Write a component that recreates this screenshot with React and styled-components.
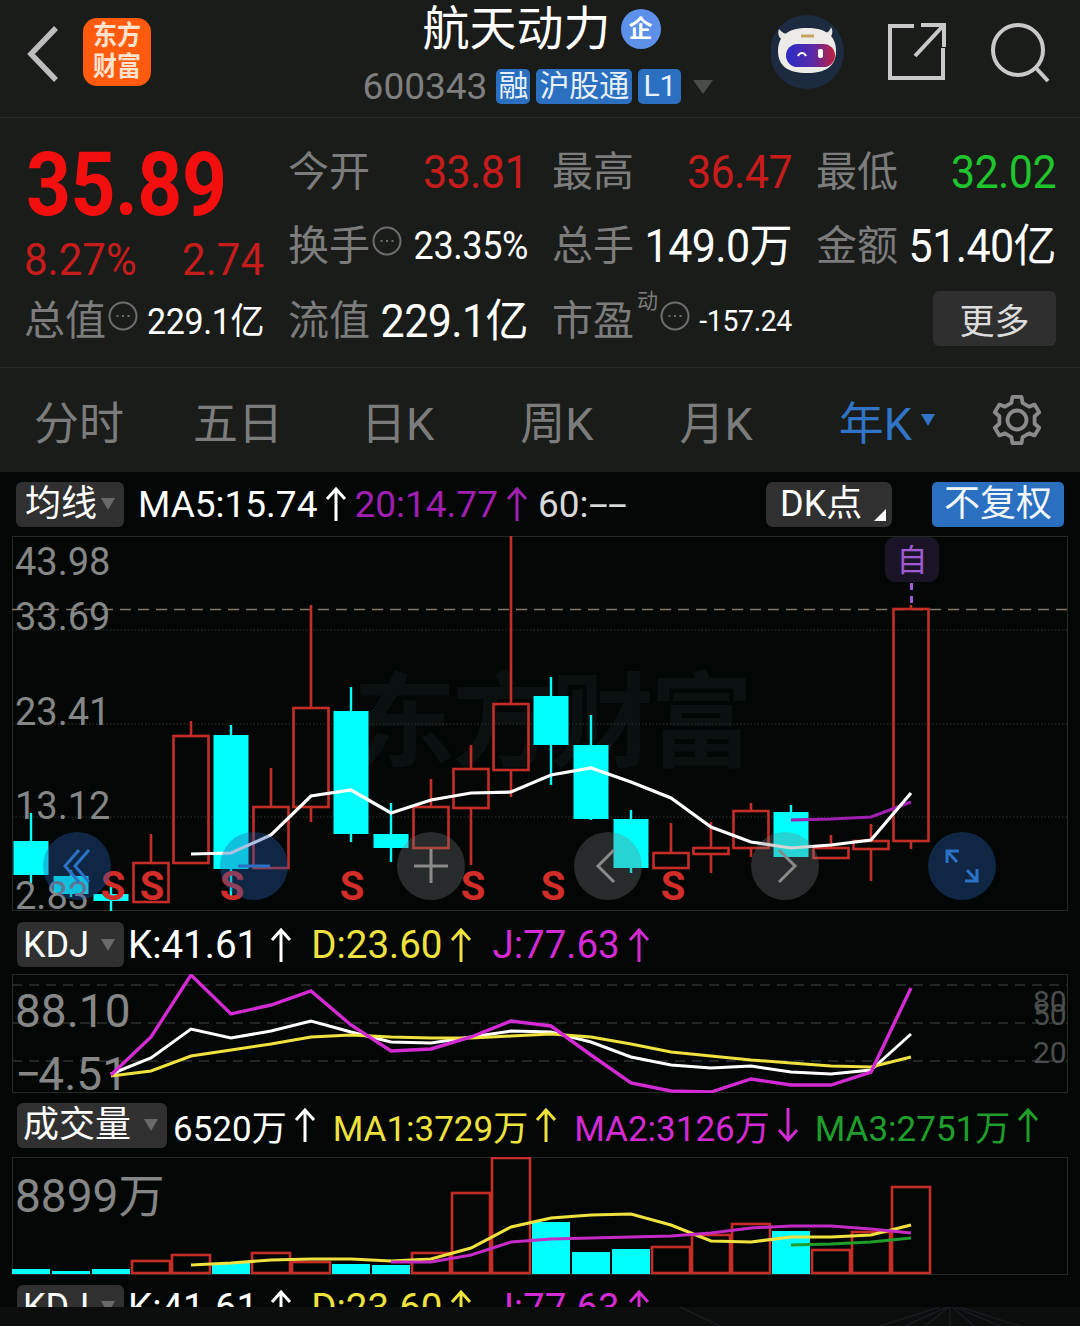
import React from 'react';
import styled, { createGlobalStyle } from 'styled-components';

const GlobalStyle = createGlobalStyle`
	html, body {
		margin: 0;
		background: #0b0e0d;
	}
	* {
		box-sizing: border-box;
	}
`;

const FONT = 'Roboto, "Noto Sans CJK SC", sans-serif';
const RED = '#c62d27';
const CYAN = '#00ffff';
const BLUE = '#2b72c6';

const Page = styled.div`
	width: 1080px;
	height: 1326px;
	display: flex;
	flex-direction: column;
	overflow: hidden;
	background: #1a1c1a;
	font-family: ${FONT};
`;

const Header = styled.header`
	height: 118px;
	display: grid;
	grid-template-columns: 1fr auto 1fr;
	border-bottom: 1px solid #2a2c2a;
`;

const HeaderLeft = styled.div`
	display: flex;
	align-items: flex-start;
	padding: 18px 0 0 26px;
	gap: 21px;
`;

const BackIcon = styled.svg`
	width: 36px;
	height: 60px;
	margin-top: 4px;
`;

const Logo = styled.div`
	width: 68px;
	height: 68px;
	border-radius: 14px;
	background: #ff5a0e;
	color: #ffe3cf;
	display: flex;
	align-items: center;
	justify-content: center;
`;

const LogoText = styled.span`
	font-size: 24px;
	font-weight: 700;
	line-height: 27px;
	text-align: center;
	transform: scaleY(1.12);
`;

const TitleBlock = styled.div`
	display: flex;
	flex-direction: column;
	align-items: center;
`;

const TitleRow = styled.div`
	display: flex;
	align-items: center;
	gap: 10px;
	height: 58px;
	padding-left: 3px;
	color: #fff;
	font-size: 47px;
	line-height: 58px;
`;

const CorpBadge = styled.span`
	width: 40px;
	height: 40px;
	border-radius: 50%;
	background: #5d90e8;
	color: #fff;
	font-size: 24px;
	font-weight: 700;
	line-height: 40px;
	text-align: center;
`;

const SubRow = styled.div`
	display: flex;
	align-items: center;
	gap: 6px;
	margin: 11px 0 0 -4px;
	height: 35px;
`;

const Code = styled.span`
	color: #7f7f7f;
	font-size: 37px;
	margin-right: 3px;
`;

const Tag = styled.span`
	height: 35px;
	padding: 0 ${({ $pad }) => $pad}px;
	border-radius: 5px;
	background: #2a6fc0;
	color: #e6f0fb;
	font-size: 30px;
	line-height: 34px;
`;

const TagArrow = styled.span`
	width: 0;
	height: 0;
	margin-left: 6px;
	border-left: 10px solid transparent;
	border-right: 10px solid transparent;
	border-top: 14px solid #4a4c4a;
`;

const HeaderRight = styled.div`
	display: flex;
	justify-content: flex-end;
	align-items: flex-start;
	padding: 15px 30px 0 0;
	gap: 40px;
`;

const IconSvg = styled.svg`
	width: ${({ $size }) => $size}px;
	height: ${({ $size }) => $size}px;
	margin-top: ${({ $top }) => $top || 0}px;
	margin-left: ${({ $left }) => $left || 0}px;
`;

const Quote = styled.section`
	height: 250px;
	padding: 24px 24px 0 24px;
	display: grid;
	grid-template-columns: repeat(4, 240px);
	grid-template-rows: 74px 75px 75px;
	column-gap: 24px;
	border-bottom: 1px solid #2a2c2a;
`;

const PriceBlock = styled.div`
	grid-row: span 2;
	display: flex;
	flex-direction: column;
`;

const Price = styled.div`
	margin: 2px 0 0 2px;
	color: #f40f0f;
	font-size: 78.5px;
	font-weight: 700;
	line-height: 72px;
	letter-spacing: -0.5px;
	transform: scaleY(1.13);
	transform-origin: left top;
`;

const Change = styled.div`
	display: flex;
	justify-content: space-between;
	margin-top: 22px;
	color: #c61c1c;
	font-size: 42px;
	line-height: 44px;
	transform: scaleY(1.06);
`;

const Stat = styled.div`
	display: flex;
	align-items: center;
	justify-content: space-between;
	height: 60px;
`;

const StatLabel = styled.span`
	display: flex;
	align-items: center;
	gap: 2px;
	color: #7c7c7c;
	font-size: 41px;
	line-height: 60px;
	white-space: nowrap;
`;

const StatValue = styled.span`
	color: ${({ $color }) => $color || '#fff'};
	font-size: ${({ $size }) => $size || 43}px;
	line-height: 60px;
	white-space: nowrap;
	letter-spacing: ${({ $size }) => ($size ? '-0.4px' : '-0.6px')};
	transform: scaleY(1.06);
`;

const Super = styled.sup`
	color: #7c7c7c;
	font-size: 21px;
	line-height: 21px;
	margin: -40px 0 0 1px;
`;

const MoreButton = styled.button`
	width: 123px;
	height: 55px;
	margin: -5px 0 0 auto;
	padding: 0;
	border: 0;
	border-radius: 6px;
	background: #2e2f2e;
	color: #dcdcdc;
	font-family: ${FONT};
	font-size: 35px;
`;

const Tabs = styled.nav`
	height: 104px;
	padding: 0 0 0 34px;
	display: flex;
	align-items: center;
	background: #1a1c1a;
`;

const Tab = styled.span`
	margin-right: ${({ $gap }) => $gap}px;
	color: ${({ $active }) => ($active ? '#2f74c6' : '#7c7c7c')};
	font-size: 45px;
	white-space: nowrap;
`;

const TabCaret = styled.span`
	width: 0;
	height: 0;
	border-left: 7px solid transparent;
	border-right: 7px solid transparent;
	border-top: 12px solid #2f74c6;
`;

const ChartArea = styled.main`
	flex: 1;
	min-height: 0;
	overflow: hidden;
	background: #020706;
`;

const LegendRow = styled.div`
	height: ${({ $height }) => $height || 64}px;
	padding: ${({ $top }) => $top || 0}px 16px 0 ${({ $left }) => $left || 16}px;
	display: flex;
	align-items: center;
`;

const Selector = styled.span`
	width: ${({ $width }) => $width}px;
	height: 45px;
	padding-left: ${({ $pad }) => $pad || 6}px;
	border-radius: 6px;
	background: #2f302f;
	color: #fff;
	font-size: 36px;
	line-height: 44px;
	display: flex;
	align-items: center;
	justify-content: space-between;
	flex-shrink: 0;
`;

const SelectorCaret = styled.span`
	width: 0;
	height: 0;
	margin-right: 9px;
	border-left: 7px solid transparent;
	border-right: 7px solid transparent;
	border-top: 12px solid #6a6a6a;
`;

const Reading = styled.span`
	display: flex;
	align-items: center;
	gap: ${({ $arrowGap }) => $arrowGap || 8}px;
	margin-left: ${({ $left }) => $left}px;
	color: ${({ $color }) => $color || '#fff'};
	font-size: ${({ $size }) => $size || 37}px;
	white-space: nowrap;
`;

const Dashes = styled.span`
	display: inline-block;
	transform: scaleX(1.85);
	transform-origin: left center;
`;

const UpDown = styled.svg`
	width: 22px;
	height: 36px;
	transform: ${({ $down }) => ($down ? 'rotate(180deg)' : 'none')};
`;

const DkButton = styled.span`
	width: 126px;
	height: 45px;
	margin-left: auto;
	border-radius: 7px;
	background: #2f302f;
	color: #fff;
	font-size: 36px;
	line-height: 44px;
	padding-left: 14px;
	position: relative;
`;

const DkCorner = styled.span`
	position: absolute;
	right: 6px;
	bottom: 6px;
	width: 0;
	height: 0;
	border-left: 12px solid transparent;
	border-bottom: 12px solid #fff;
`;

const AdjustButton = styled.span`
	width: 132px;
	height: 45px;
	margin-left: 40px;
	border-radius: 5px;
	background: #2a6fc0;
	color: #f2f7fd;
	font-size: 36px;
	line-height: 44px;
	text-align: center;
`;

const Frame = styled.div`
	position: relative;
	width: 1056px;
	height: ${({ $height }) => $height}px;
	margin-left: 12px;
	border: 1px solid #262a27;
`;

const Drawing = styled.svg`
	display: block;
	position: absolute;
	left: -1px;
	top: -1px;
	width: 1056px;
	height: ${({ $height }) => $height}px;
`;

const Watermark = styled.span`
	position: absolute;
	left: 340px;
	top: 127px;
	color: #0b1110;
	font-size: 103px;
	font-weight: 700;
	line-height: 120px;
	letter-spacing: -4px;
	white-space: nowrap;
`;

const RoundButton = styled.span`
	position: absolute;
	left: ${({ $cx }) => $cx - 46}px;
	top: 295px;
	width: 68px;
	height: 68px;
	border-radius: 50%;
	background: ${({ $blue }) => ($blue ? 'rgba(36, 92, 170, 0.38)' : 'rgba(120, 120, 120, 0.32)')};
	display: flex;
	align-items: center;
	justify-content: center;
`;

const RoundIcon = styled.svg`
	width: 40px;
	height: 40px;
	fill: none;
	stroke: ${({ $blue }) => ($blue ? BLUE : '#8a8a8a')};
	stroke-width: 3;
`;

const AxisText = styled.text`
	fill: ${({ $dim }) => ($dim ? '#4c4e4d' : '#868686')};
	font-family: ${FONT};
	font-size: ${({ $size }) => $size}px;
`;

const SellMark = styled.text`
	fill: #d22d28;
	font-family: ${FONT};
	font-size: 40px;
	font-weight: 700;
	text-anchor: middle;
`;

const SelfMark = styled.text`
	fill: #a05ad6;
	font-family: ${FONT};
	font-size: 31px;
	text-anchor: middle;
`;

const BottomBar = styled.footer`
	height: 19px;
	flex-shrink: 0;
	background: #0b0e0d;
`;

const FanLines = styled.svg`
	display: block;
	width: 1080px;
	height: 19px;
`;

const cx = (i) => 31 + 40 * i;

// [top of wick, body top, body bottom, bottom of wick, rising]
const CANDLES = [
	[813, 841, 875, 883, false],
	[870, 876, 894, 897, false],
	[887, 894, 901, 911, false],
	[834, 863, 902, 902, true],
	[721, 736, 863, 863, true],
	[725, 735, 869, 897, false],
	[768, 807, 868, 868, true],
	[605, 708, 807, 822, true],
	[687, 711, 834, 842, false],
	[803, 834, 848, 862, false],
	[779, 807, 848, 848, true],
	[745, 769, 808, 865, true],
	[536, 704, 770, 797, true],
	[677, 696, 745, 785, false],
	[715, 745, 819, 820, false],
	[810, 819, 868, 873, false],
	[823, 853, 868, 868, true],
	[822, 848, 854, 873, true],
	[803, 811, 848, 857, true],
	[805, 812, 857, 857, false],
	[835, 848, 858, 858, true],
	[824, 841, 849, 881, true],
	[605, 609, 841, 849, true],
];

const line = (startIndex, ys) => ys.map((y, i) => `${cx(startIndex + i)},${y}`).join(' ');

const MA5 = line(4, [854, 853, 835, 796, 790, 813, 800, 793, 792, 775, 768, 782, 798, 827, 842, 848, 845, 840, 793]);
const MA20 = line(19, [820, 819, 817, 802]);

const KDJ_J = line(2, [1075, 1037, 975, 1014, 1005, 991, 1025, 1051, 1049, 1037, 1021, 1026, 1055, 1083, 1091, 1092, 1079, 1085, 1085, 1072, 988]);
const KDJ_K = line(2, [1074, 1058, 1029, 1038, 1031, 1021, 1032, 1042, 1043, 1037, 1031, 1032, 1042, 1057, 1065, 1068, 1066, 1072, 1074, 1070, 1034]);
const KDJ_D = line(2, [1076, 1071, 1056, 1050, 1044, 1037, 1035, 1037, 1038, 1038, 1036, 1034, 1037, 1044, 1052, 1056, 1060, 1063, 1066, 1067, 1057]);

// [bar top, rising]
const VOLUMES = [
	[1269, false], [1271, false], [1269, false], [1261, true], [1255, true], [1263, false],
	[1253, true], [1262, true], [1264, false], [1265, false], [1253, true], [1193, true],
	[1158, true], [1222, false], [1252, false], [1249, false], [1247, true], [1235, true],
	[1224, true], [1231, false], [1250, true], [1232, true], [1187, true],
];

const VOL_MA1 = line(4, [1265, 1263, 1260, 1259, 1259, 1261, 1259, 1248, 1227, 1218, 1215, 1214, 1225, 1241, 1242, 1237, 1237, 1235, 1225]);
const VOL_MA2 = line(9, [1262, 1262, 1255, 1242, 1239, 1238, 1237, 1236, 1233, 1228, 1226, 1226, 1229, 1233]);
const VOL_MA3 = line(19, [1245, 1244, 1242, 1238]);

const AXIS_LABELS = [
	['43.98', 575],
	['33.69', 630],
	['23.41', 725],
	['13.12', 819],
	['2.83', 909],
];

const SELLS = [113, 152, 232, 352, 473, 553, 673];

// six-toothed gear outline, each tooth a trapezoid round the centre
const gearPath = () => {
	const polar = (r, deg) => {
		const a = (deg * Math.PI) / 180;
		return `${(27 + r * Math.cos(a)).toFixed(1)} ${(27 + r * Math.sin(a)).toFixed(1)}`;
	};
	const points = [];
	for (let k = 0; k < 6; k++) {
		const a = -90 + 60 * k;
		points.push(polar(18, a - 18), polar(23.5, a - 11), polar(23.5, a + 11), polar(18, a + 18));
	}
	return `M${points.join('L')}Z`;
};

const Arrow = ({ down }) => (
	<UpDown viewBox="0 0 22 36" $down={down} fill="none" stroke="currentColor" strokeWidth="3">
		<path d="M11 35V3M2 13l9-10 9 10" />
	</UpDown>
);

const InfoDot = ({ size = 30 }) => (
	<IconSvg viewBox="0 0 30 30" $size={size} $top={-10}>
		<circle cx="15" cy="15" r="13.5" fill="none" stroke="#6e6e6e" strokeWidth="2" />
		<path d="M8.5 15h2M14 15h2M19.5 15h2" stroke="#6e6e6e" strokeWidth="2" />
	</IconSvg>
);

const Robot = () => (
	<IconSvg viewBox="0 0 74 74" $size={74}>
		<defs>
			<linearGradient id="visor" x1="0" x2="1" y1="0" y2="0">
				<stop offset="0" stopColor="#2b2bc8" />
				<stop offset="0.55" stopColor="#5a2aa8" />
				<stop offset="1" stopColor="#c0203c" />
			</linearGradient>
		</defs>
		<circle cx="36" cy="37" r="37" fill="#1c2b40" />
		<path d="M8 14c-2 5 0 10 6 12l4-6c-4-1-8-3-10-6zM60 12c3 5 1 11-5 13l-3-6c4-1 7-3 8-7z" fill="#e6e4df" />
		<path d="M36 13c18 0 29 7 29 23 0 15-10 22-29 22S7 51 7 36c0-16 11-23 29-23z" fill="#ecebe7" />
		<path d="M30 21h13" stroke="#c9a25e" strokeWidth="3" />
		<rect x="15" y="29" width="49" height="23" rx="11.5" fill="url(#visor)" />
		<path d="M27 41c2-4 6-4 8 0" fill="none" stroke="#fff" strokeWidth="2" />
		<rect x="47" y="34" width="5" height="9" rx="2" fill="#fff" />
	</IconSvg>
);

const Candles = () =>
	CANDLES.map(([high, top, bottom, low, rising], i) => {
		const x = cx(i);
		if (rising) {
			return (
				<g key={i} stroke={RED} strokeWidth="2.6" fill="none">
					<path d={`M${x} ${high}V${top}M${x} ${bottom}V${low}`} />
					<rect x={x - 17.5} y={top} width="35" height={bottom - top} />
				</g>
			);
		}
		return (
			<g key={i} fill={CYAN} stroke="none">
				<rect x={x - 1.2} y={high} width="2.4" height={low - high} />
				<rect x={x - 17.5} y={top} width="35" height={bottom - top} />
			</g>
		);
	});

const Volumes = () =>
	VOLUMES.map(([top, rising], i) => {
		const x = cx(i);
		return rising ? (
			<rect key={i} x={x - 19} y={top} width="38" height={1273 - top} fill="none" stroke={RED} strokeWidth="2.6" />
		) : (
			<rect key={i} x={x - 19} y={top} width="38" height={1274 - top} fill={CYAN} />
		);
	});

const KdjLegend = ({ height, top }) => (
	<LegendRow $height={height} $top={top} $left={17}>
		<Selector $width={107}>
			KDJ
			<SelectorCaret />
		</Selector>
		<Reading $left={4} $arrowGap={12} $size={38.5}>
			K:41.61
			<Arrow />
		</Reading>
		<Reading $left={19} $size={38.5} $color="#f0e23e">
			D:23.60
			<Arrow />
		</Reading>
		<Reading $left={20} $size={38.5} $color="#d42ad4">
			J:77.63
			<Arrow />
		</Reading>
	</LegendRow>
);

const App = () => (
	<Page>
		<GlobalStyle />
		<Header>
			<HeaderLeft>
				<BackIcon viewBox="0 0 36 60" fill="none" stroke="#bdbdbd" strokeWidth="5.5">
					<path d="M30 6L5 32l25 26" />
				</BackIcon>
				<Logo>
					<LogoText>
						东方
						<br />
						财富
					</LogoText>
				</Logo>
			</HeaderLeft>
			<TitleBlock>
				<TitleRow>
					航天动力
					<CorpBadge>企</CorpBadge>
				</TitleRow>
				<SubRow>
					<Code>600343</Code>
					<Tag $pad={2}>融</Tag>
					<Tag $pad={3}>沪股通</Tag>
					<Tag $pad={5}>L1</Tag>
					<TagArrow />
				</SubRow>
			</TitleBlock>
			<HeaderRight>
				<Robot />
				<IconSvg viewBox="0 0 58 58" $size={58} $top={7} $left={3} fill="none" stroke="#c9c9c9" strokeWidth="4">
					<path d="M26 4H2v52h53V26M27 34L54 5M33 3h23v22" />
				</IconSvg>
				<IconSvg viewBox="0 0 60 60" $size={60} $top={7} $left={4} fill="none" stroke="#c9c9c9" strokeWidth="4">
					<circle cx="28" cy="28" r="25" />
					<path d="M46 46l12 13" />
				</IconSvg>
			</HeaderRight>
		</Header>

		<Quote>
			<PriceBlock>
				<Price>35.89</Price>
				<Change>
					<span>8.27%</span>
					<span>2.74</span>
				</Change>
			</PriceBlock>
			<Stat>
				<StatLabel>今开</StatLabel>
				<StatValue $color="#c81c1c">33.81</StatValue>
			</Stat>
			<Stat>
				<StatLabel>最高</StatLabel>
				<StatValue $color="#c81c1c">36.47</StatValue>
			</Stat>
			<Stat>
				<StatLabel>最低</StatLabel>
				<StatValue $color="#1fc52c">32.02</StatValue>
			</Stat>
			<Stat>
				<StatLabel>
					换手
					<InfoDot />
				</StatLabel>
				<StatValue $size={36}>23.35%</StatValue>
			</Stat>
			<Stat>
				<StatLabel>总手</StatLabel>
				<StatValue>149.0万</StatValue>
			</Stat>
			<Stat>
				<StatLabel>金额</StatLabel>
				<StatValue>51.40亿</StatValue>
			</Stat>
			<Stat>
				<StatLabel>
					总值
					<InfoDot />
				</StatLabel>
				<StatValue $size={34}>229.1亿</StatValue>
			</Stat>
			<Stat>
				<StatLabel>流值</StatLabel>
				<StatValue>229.1亿</StatValue>
			</Stat>
			<Stat>
				<StatLabel>
					市盈
					<Super>动</Super>
					<InfoDot />
				</StatLabel>
				<StatValue $size={28.5}>-157.24</StatValue>
			</Stat>
			<Stat>
				<MoreButton>更多</MoreButton>
			</Stat>
		</Quote>

		<Tabs>
			<Tab $gap={69}>分时</Tab>
			<Tab $gap={78}>五日</Tab>
			<Tab $gap={86}>日K</Tab>
			<Tab $gap={86}>周K</Tab>
			<Tab $gap={86}>月K</Tab>
			<Tab $active $gap={9}>
				年K
			</Tab>
			<TabCaret />
			<IconSvg viewBox="0 0 54 54" $size={54} $left={55} fill="none" stroke="#8a8a8a" strokeWidth="3.8" strokeLinejoin="round">
				<path d={gearPath()} />
				<circle cx="27" cy="27" r="9.5" />
			</IconSvg>
		</Tabs>

		<ChartArea>
			<LegendRow>
				<Selector $width={108} $pad={9}>
					均线
					<SelectorCaret />
				</Selector>
				<Reading $left={14}>
					MA5:15.74
					<Arrow />
				</Reading>
				<Reading $left={7} $color="#a01fb0">
					20:14.77
					<Arrow />
				</Reading>
				<Reading $left={10} $color="#d8d8d8">
					<span>
						60:<Dashes>--</Dashes>
					</span>
				</Reading>
				<DkButton>
					DK点
					<DkCorner />
				</DkButton>
				<AdjustButton>不复权</AdjustButton>
			</LegendRow>
			<Frame $height={375}>
				<Watermark>东方财富</Watermark>
				<Drawing viewBox="12 536 1056 375" $height={375}>
					<path d="M12 609.5H1067" stroke="#85766a" strokeWidth="1.6" strokeDasharray="11 7" />
					<path d="M12 630H1067M12 724H1067M12 817H1067" stroke="#232725" strokeWidth="1.4" strokeDasharray="1.5 2" />
					<Candles />
					<polyline points={MA20} fill="none" stroke="#a01fb0" strokeWidth="3.2" />
					<polyline points={MA5} fill="none" stroke="#fff" strokeWidth="3.2" />
					{AXIS_LABELS.map(([label, y]) => (
						<AxisText key={label} x="15" y={y} $size={38}>
							{label}
						</AxisText>
					))}
					{SELLS.map((x) => (
						<SellMark key={x} x={x} y="900">
							S
						</SellMark>
					))}
					<rect x="885" y="537" width="54" height="45" rx="10" fill="#1b1427" />
					<SelfMark x="912" y="571">
						自
					</SelfMark>
					<path d="M911.5 583V606" stroke="#a05ad6" strokeWidth="3" strokeDasharray="7 6" />
				</Drawing>
				<RoundButton $cx={76} $blue>
					<RoundIcon viewBox="0 0 40 40" $blue>
						<path d="M22 4L8 20l14 16M32 4L18 20l14 16" />
					</RoundIcon>
				</RoundButton>
				<RoundButton $cx={253} $blue>
					<RoundIcon viewBox="0 0 40 40" $blue>
						<path d="M4 20h32" />
					</RoundIcon>
				</RoundButton>
				<RoundButton $cx={430}>
					<RoundIcon viewBox="0 0 40 40">
						<path d="M3 20h34M20 3v34" />
					</RoundIcon>
				</RoundButton>
				<RoundButton $cx={607}>
					<RoundIcon viewBox="0 0 40 40">
						<path d="M26 4L10 20l16 16" />
					</RoundIcon>
				</RoundButton>
				<RoundButton $cx={784}>
					<RoundIcon viewBox="0 0 40 40">
						<path d="M14 4l16 16-16 16" />
					</RoundIcon>
				</RoundButton>
				<RoundButton $cx={961} $blue>
					<RoundIcon viewBox="0 0 40 40" $blue>
						<path d="M5 17V5h12M5 5l10 11M35 23v12H23M35 35L25 24" />
					</RoundIcon>
				</RoundButton>
			</Frame>

			<KdjLegend height={63} top={4} />
			<Frame $height={119}>
				<Drawing viewBox="12 974 1056 119" $height={119}>
					<path d="M12 985H1067M12 1023H1067M12 1061H1067" stroke="#2e322f" strokeWidth="1.4" strokeDasharray="10 7" />
					<AxisText x="15" y="1027" $size={46}>
						88.10
					</AxisText>
					<AxisText x="15" y="1090" $size={46}>
						−<tspan dx="-3">4.51</tspan>
					</AxisText>
					<AxisText x="1033" y="1012" $size={30} $dim>
						80
					</AxisText>
					<AxisText x="1033" y="1025" $size={30} $dim>
						50
					</AxisText>
					<AxisText x="1033" y="1063" $size={30} $dim>
						20
					</AxisText>
					<polyline points={KDJ_K} fill="none" stroke="#fff" strokeWidth="3" />
					<polyline points={KDJ_D} fill="none" stroke="#f0e23e" strokeWidth="3" />
					<polyline points={KDJ_J} fill="none" stroke="#d42ad4" strokeWidth="3.4" />
				</Drawing>
			</Frame>

			<LegendRow $left={17}>
				<Selector $width={150}>
					成交量
					<SelectorCaret />
				</Selector>
				<Reading $left={6} $size={35} $arrowGap={7}>
					6520万
					<Arrow />
				</Reading>
				<Reading $left={17} $size={35} $arrowGap={7} $color="#f0e23e">
					MA1:3729万
					<Arrow />
				</Reading>
				<Reading $left={17} $size={35} $arrowGap={7} $color="#d42ad4">
					MA2:3126万
					<Arrow down />
				</Reading>
				<Reading $left={16} $size={35} $arrowGap={7} $color="#1f9e2b">
					MA3:2751万
					<Arrow />
				</Reading>
			</LegendRow>
			<Frame $height={118}>
				<Drawing viewBox="12 1157 1056 118" $height={118}>
					<AxisText x="15" y="1212" $size={46}>
						8899万
					</AxisText>
					<Volumes />
					<polyline points={VOL_MA3} fill="none" stroke="#1f9e2b" strokeWidth="3" />
					<polyline points={VOL_MA1} fill="none" stroke="#f0e23e" strokeWidth="3" />
					<polyline points={VOL_MA2} fill="none" stroke="#c42ac4" strokeWidth="3" />
				</Drawing>
			</Frame>

			<KdjLegend />
		</ChartArea>
		<BottomBar>
			<FanLines viewBox="0 0 1080 19" fill="none" stroke="#191d22" strokeWidth="1.4">
				<path d="M680 0l40 19M880 19l60-19M905 19l42-19M925 19l24-19M950 0v19M952 0l22 19M955 0l45 19M960 0l60 19" />
			</FanLines>
		</BottomBar>
	</Page>
);

export default App;
